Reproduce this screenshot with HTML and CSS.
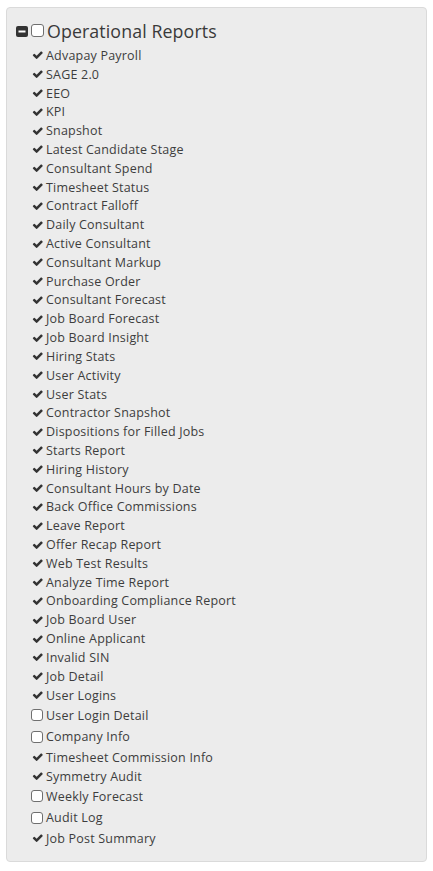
FILE: index.html
```html
<!DOCTYPE html>
<html>
<head>
<meta charset="utf-8">
<link rel="stylesheet" href="styles.css">
</head>
<body>
<div class="panel">
  <div class="header">
    <svg class="minus" viewBox="0 0 12 11"><rect x="0" y="0" width="12" height="11" rx="2" fill="#333"/><rect x="2.5" y="4.5" width="7" height="2" fill="#fff"/></svg>
    <span class="box hbox"></span>
    <span class="title">Operational Reports</span>
  </div>
  <ul class="list">
    <li class="ck">Advapay Payroll</li>
    <li class="ck">SAGE 2.0</li>
    <li class="ck">EEO</li>
    <li class="ck">KPI</li>
    <li class="ck">Snapshot</li>
    <li class="ck">Latest Candidate Stage</li>
    <li class="ck">Consultant Spend</li>
    <li class="ck">Timesheet Status</li>
    <li class="ck">Contract Falloff</li>
    <li class="ck">Daily Consultant</li>
    <li class="ck">Active Consultant</li>
    <li class="ck">Consultant Markup</li>
    <li class="ck">Purchase Order</li>
    <li class="ck">Consultant Forecast</li>
    <li class="ck">Job Board Forecast</li>
    <li class="ck">Job Board Insight</li>
    <li class="ck">Hiring Stats</li>
    <li class="ck">User Activity</li>
    <li class="ck">User Stats</li>
    <li class="ck">Contractor Snapshot</li>
    <li class="ck">Dispositions for Filled Jobs</li>
    <li class="ck">Starts Report</li>
    <li class="ck">Hiring History</li>
    <li class="ck">Consultant Hours by Date</li>
    <li class="ck">Back Office Commissions</li>
    <li class="ck">Leave Report</li>
    <li class="ck">Offer Recap Report</li>
    <li class="ck">Web Test Results</li>
    <li class="ck">Analyze Time Report</li>
    <li class="ck">Onboarding Compliance Report</li>
    <li class="ck">Job Board User</li>
    <li class="ck">Online Applicant</li>
    <li class="ck">Invalid SIN</li>
    <li class="ck">Job Detail</li>
    <li class="ck">User Logins</li>
    <li class="cb">User Login Detail</li>
    <li class="cb">Company Info</li>
    <li class="ck">Timesheet Commission Info</li>
    <li class="ck">Symmetry Audit</li>
    <li class="cb">Weekly Forecast</li>
    <li class="cb">Audit Log</li>
    <li class="ck">Job Post Summary</li>
  </ul>
</div>
</body>
</html>
```
FILE: styles.css
```css
html, body {
  margin: 0;
  padding: 0;
  background: #fff;
}
body {
  font-family: "Open Sans", "Liberation Sans", sans-serif;
  color: #3d3d3d;
}
.panel {
  margin: 7px 6px 0 6px;
  width: 421px;
  height: 855px;
  box-sizing: border-box;
  background: #ececec;
  border: 1px solid #dadada;
  border-radius: 4px;
  padding: 8px 9px 0 9px;
}
.header {
  display: flex;
  align-items: center;
  height: 30px;
}
.minus {
  width: 12px;
  height: 11px;
  flex: none;
  margin-left: 0;
}
.box {
  display: inline-block;
  flex: none;
  width: 11px;
  height: 11px;
  background: #fff;
  border: 1px solid #6f6f6f;
  border-radius: 3px;
}
.hbox {
  margin-left: 3px;
  margin-top: -1px;
}
.title {
  margin-left: 3px;
  font-size: 17.8px;
  letter-spacing: 0.1px;
  color: #3a3a3a;
}
.list {
  list-style: none;
  margin: 0;
  padding: 0 0 0 14px;
}
.list li {
  display: flex;
  align-items: center;
  font-size: 12.5px;
  letter-spacing: 0.2px;
  white-space: nowrap;
}
.list li.ck {
  height: 18.82px;
}
.list li.cb {
  height: 21.7px;
}
.list li.ck::before {
  content: "";
  flex: none;
  width: 11px;
  height: 9px;
  margin: 0 3px 0 2px;
  background: no-repeat center / contain url("data:image/svg+xml;utf8,<svg xmlns='http://www.w3.org/2000/svg' viewBox='0 270 1700 1250'><path fill='%23333' d='M1671 566q0 40-28 68l-724 724-136 136q-28 28-68 28t-68-28l-136-136-362-362q-28-28-28-68t28-68l136-136q28-28 68-28t68 28l294 295 656-657q28-28 68-28t68 28l136 136q28 28 28 68z'/></svg>");
}
.list li.cb::before {
  content: "";
  flex: none;
  box-sizing: border-box;
  width: 12px;
  height: 12px;
  margin: 0 3px 0 1px;
  background: #fff;
  border: 1px solid #6f6f6f;
  border-radius: 3px;
}
```
